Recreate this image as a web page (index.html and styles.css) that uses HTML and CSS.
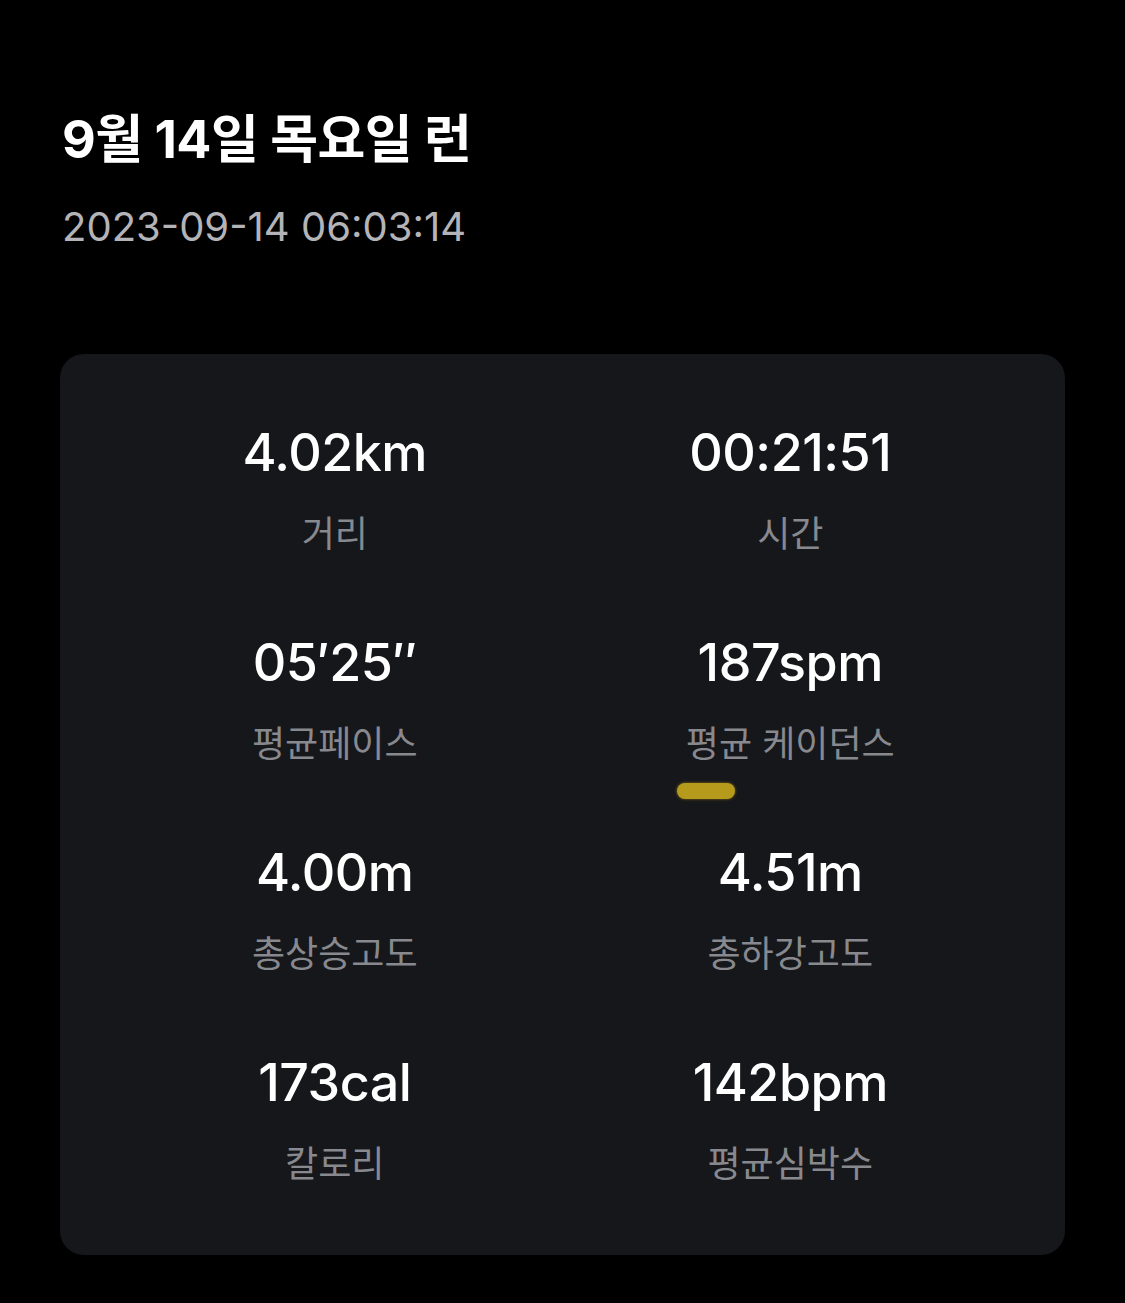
FILE: index.html
```html
<!DOCTYPE html>
<html lang="ko">
<head>
  <meta charset="UTF-8" />
  <meta name="viewport" content="width=device-width, initial-scale=1" />
  <title>9월 14일 목요일 런</title>
  <link rel="stylesheet" href="styles.css">
</head>
<body>
  <header class="run-header">
    <h1 class="run-title">9월 14일 목요일 런</h1>
    <p class="run-date">2023-09-14 06:03:14</p>
  </header>

  <section class="stats-card">
    <div class="stat">
      <div class="stat-value">4.02km</div>
      <div class="stat-label">거리</div>
    </div>
    <div class="stat">
      <div class="stat-value">00:21:51</div>
      <div class="stat-label">시간</div>
    </div>
    <div class="stat">
      <div class="stat-value">05′25″</div>
      <div class="stat-label">평균페이스</div>
    </div>
    <div class="stat">
      <div class="stat-value">187spm</div>
      <div class="stat-label">평균 케이던스</div>
      <span class="marker"></span>
    </div>
    <div class="stat">
      <div class="stat-value">4.00m</div>
      <div class="stat-label">총상승고도</div>
    </div>
    <div class="stat">
      <div class="stat-value">4.51m</div>
      <div class="stat-label">총하강고도</div>
    </div>
    <div class="stat">
      <div class="stat-value">173cal</div>
      <div class="stat-label">칼로리</div>
    </div>
    <div class="stat">
      <div class="stat-value">142bpm</div>
      <div class="stat-label">평균심박수</div>
    </div>
  </section>
</body>
</html>
```

FILE: styles.css
```css
body {
  margin: 0;
  background: #000;
  color: #fff;
  font-family: Inter, "Noto Sans CJK KR", sans-serif;
  padding: 0 60px;
}

.run-header {
  padding-top: 108px;
  padding-left: 2px;
}
.run-title {
  margin: 0;
  font-family: Inter, "Noto Sans CJK KR", sans-serif;
  font-size: 52px;
  font-weight: 700;
  line-height: 64px;
  letter-spacing: -0.5px;
}
.run-date {
  margin: 29px 0 0;
  font-size: 40px;
  line-height: 52px;
  color: #b4b4b8;
}

.stats-card {
  margin-top: 101px;
  background: #16171b;
  border-radius: 24px;
  padding: 67px 47px 71px;
  display: grid;
  grid-template-columns: 1fr 1fr;
  row-gap: 77px;
}

.stat {
  position: relative;
  display: flex;
  flex-direction: column;
  align-items: center;
  gap: 23px;
}
.stat-value {
  font-size: 52px;
  line-height: 64px;
  font-weight: 500;
  letter-spacing: -0.5px;
}
.stat-label {
  font-family: "Noto Sans CJK KR", sans-serif;
  font-size: 36px;
  line-height: 46px;
  color: #88898e;
}

.marker {
  position: absolute;
  left: 114px;
  top: 152px;
  width: 58px;
  height: 16px;
  border-radius: 8px;
  background: #b59a1c;
  box-shadow: 0 0 3px #8a7412;
}
```
